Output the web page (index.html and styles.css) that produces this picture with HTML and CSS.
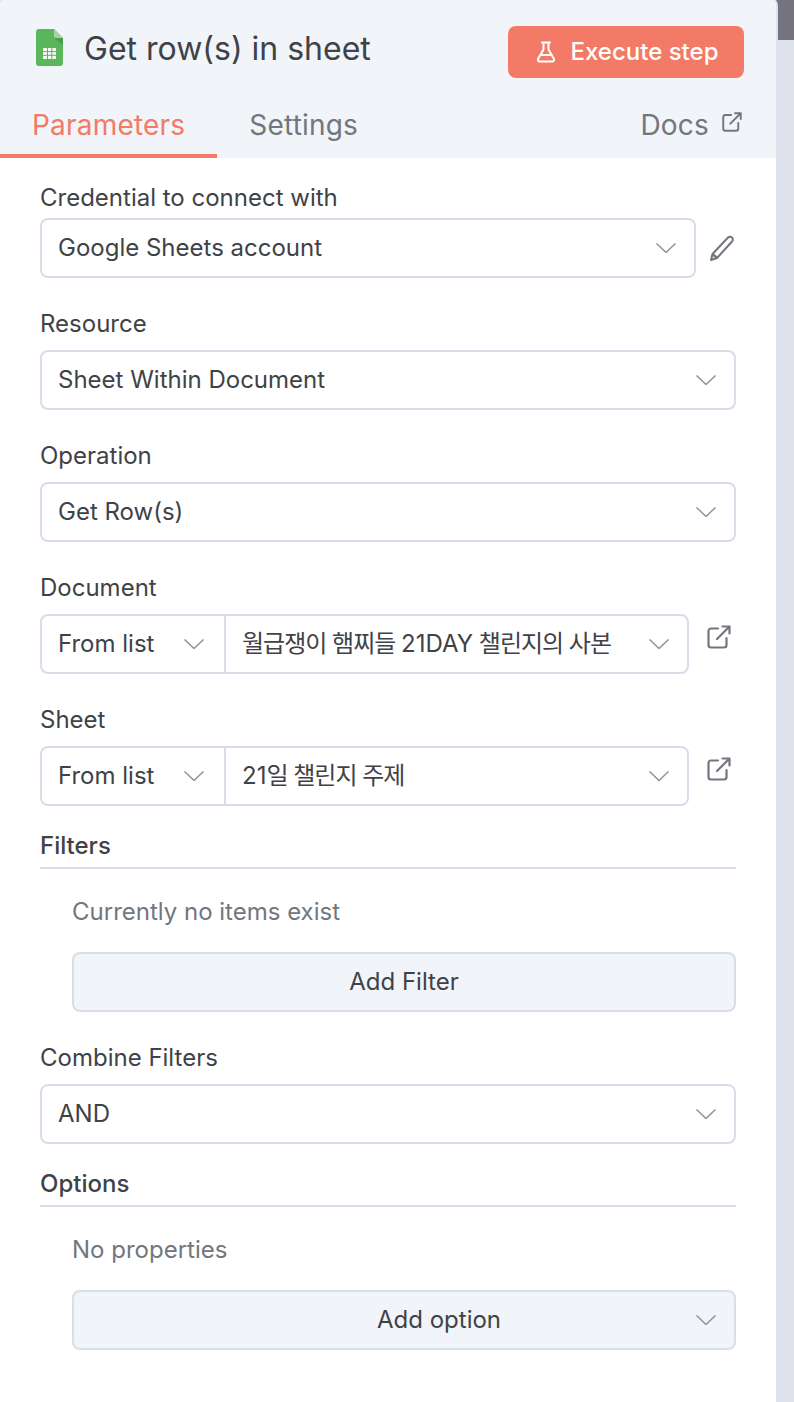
FILE: index.html
```html
<!DOCTYPE html>
<html>
<head>
    <meta charset="utf-8">
    <title>Get row(s) in sheet</title>
    <link rel="stylesheet" href="styles.css">
</head>
<body>
    <div class="page">
        <main class="panel">
            <header class="head">
                <div class="title-row">
                    <svg class="sheet-icon" width="28" height="37" viewBox="0 0 28 37">
                        <path d="M3 0H18L27 9V34a3 3 0 0 1-3 3H3a3 3 0 0 1-3-3V3a3 3 0 0 1 3-3z" fill="#5bb55b"/>
                        <path d="M18 9L27 16V9z" fill="#4a9f4c"/>
                        <path d="M18 0L27 9H20a2 2 0 0 1-2-2z" fill="#a3d6a0"/>
                        <path d="M7 19H20V30H7z" fill="#f3faf2"/>
                        <path d="M7 22.600H20M7 26.300H20M11.500 19V30M15.800 19V30" stroke="#5bb55b" stroke-width="1"/>
                    </svg>
                    <h1 class="title">Get row(s) in sheet</h1>
                    <button class="run-btn">
                        <svg width="20" height="22" viewBox="0 0 20 22" fill="none" stroke="#fff" stroke-width="2" stroke-linecap="round" stroke-linejoin="round">
                            <path d="M6 1.500H14M7.500 1.500V8.500L2 18a1.800 1.800 0 0 0 1.600 2.500H16.400A1.800 1.800 0 0 0 18 18L12.500 8.500V1.500M4.800 14H15.200"/>
                        </svg>
                        <span>Execute step</span>
                    </button>
                </div>
                <nav class="tabs">
                    <a class="tab active">Parameters</a>
                    <a class="tab">Settings</a>
                    <a class="tab docs">Docs
                        <svg width="20" height="20" viewBox="0 0 24 24" fill="none" stroke="#73767d" stroke-width="2.300" stroke-linecap="round" stroke-linejoin="round">
                            <path d="M11 3.500H4a2.500 2.500 0 0 0-2.500 2.500V20A2.500 2.500 0 0 0 4 22.500H17a2.500 2.500 0 0 0 2.500-2.500V13M10 14L22.500 1.500M15.500 1.500H22.500V8.500"/>
                        </svg>
                    </a>
                </nav>
            </header>

            <section class="body">
                <div class="field first">
                    <label>Credential to connect with</label>
                    <div class="row">
                        <div class="select grow"><span>Google Sheets account</span><svg class="chev" viewBox="0 0 20 10"><path d="M.5.500L10 9.500 19.500.500"/></svg></div>
                        <svg class="pencil" width="26" height="27" viewBox="0 0 26 27" fill="none" stroke="#73767d" stroke-width="2" stroke-linejoin="round">
                            <path d="M19 2.500a2.800 2.800 0 0 1 4 0 2.800 2.800 0 0 1 0 4L8 23l-6 2 1.500-6z"/>
                            <path d="M3.500 19l4.500 4" stroke-width="2.500"/>
                        </svg>
                    </div>
                </div>

                <div class="field">
                    <label>Resource</label>
                    <div class="select"><span>Sheet Within Document</span><svg class="chev" viewBox="0 0 20 10"><path d="M.5.500L10 9.500 19.500.500"/></svg></div>
                </div>

                <div class="field">
                    <label>Operation</label>
                    <div class="select"><span>Get Row(s)</span><svg class="chev" viewBox="0 0 20 10"><path d="M.5.500L10 9.500 19.500.500"/></svg></div>
                </div>

                <div class="field">
                    <label>Document</label>
                    <div class="row">
                        <div class="combo">
                            <div class="combo-mode"><span>From list</span><svg class="chev" viewBox="0 0 20 10"><path d="M.5.500L10 9.500 19.500.500"/></svg></div>
                            <div class="combo-value"><span><span class="ko">월급쟁이 햄찌들 </span>21DAY<span class="ko"> 챌린지의 사본</span></span><svg class="chev" viewBox="0 0 20 10"><path d="M.5.500L10 9.500 19.500.500"/></svg></div>
                        </div>
                        <svg class="open" width="24" height="24" viewBox="0 0 24 24" fill="none" stroke="#73767d" stroke-width="2.200" stroke-linecap="round" stroke-linejoin="round">
                            <path d="M11 3.500H4a2.500 2.500 0 0 0-2.500 2.500V20A2.500 2.500 0 0 0 4 22.500H17a2.500 2.500 0 0 0 2.500-2.500V13M10 14L22.500 1.500M15.500 1.500H22.500V8.500"/>
                        </svg>
                    </div>
                </div>

                <div class="field tight">
                    <label>Sheet</label>
                    <div class="row">
                        <div class="combo">
                            <div class="combo-mode"><span>From list</span><svg class="chev" viewBox="0 0 20 10"><path d="M.5.500L10 9.500 19.500.500"/></svg></div>
                            <div class="combo-value"><span>21<span class="ko">일 챌린지 주제</span></span><svg class="chev" viewBox="0 0 20 10"><path d="M.5.500L10 9.500 19.500.500"/></svg></div>
                        </div>
                        <svg class="open" width="24" height="24" viewBox="0 0 24 24" fill="none" stroke="#73767d" stroke-width="2.200" stroke-linecap="round" stroke-linejoin="round">
                            <path d="M11 3.500H4a2.500 2.500 0 0 0-2.500 2.500V20A2.500 2.500 0 0 0 4 22.500H17a2.500 2.500 0 0 0 2.500-2.500V13M10 14L22.500 1.500M15.500 1.500H22.500V8.500"/>
                        </svg>
                    </div>
                </div>

                <div class="group">
                    <div class="group-title">Filters</div>
                    <div class="group-inner">
                        <p class="empty">Currently no items exist</p>
                        <div class="add-btn"><span>Add Filter</span></div>
                    </div>
                </div>

                <div class="field tight">
                    <label>Combine Filters</label>
                    <div class="select"><span>AND</span><svg class="chev" viewBox="0 0 20 10"><path d="M.5.500L10 9.500 19.500.500"/></svg></div>
                </div>

                <div class="group">
                    <div class="group-title">Options</div>
                    <div class="group-inner">
                        <p class="empty">No properties</p>
                        <div class="add-btn add-option"><span>Add option</span><svg class="chev" viewBox="0 0 20 10"><path d="M.5.500L10 9.500 19.500.500"/></svg></div>
                    </div>
                </div>
            </section>
        </main>
        <aside class="side"><div class="side-top"></div></aside>
    </div>
</body>
</html>
```
FILE: styles.css
```css
* {
    box-sizing: border-box;
    font-family: Inter, "Noto Sans CJK KR", sans-serif;
}
body {
    margin: 0;
    background-color: #dfe2ec;
    color: #3f4247;
}
.page {
    display: flex;
    height: 1402px;
    overflow: hidden;
}
.panel {
    position: relative;
    z-index: 1;
    width: 776px;
    height: 1404px;
    margin-top: -2px;
    background: #fff;
    border-radius: 8px 8px 0 0;
    box-shadow: 0 0 0 2px #dfe2ec;
    overflow: hidden;
    flex-shrink: 0;
}
.side {
    flex: 1;
    background: #dfe2ec;
}
.side-top {
    height: 40px;
    margin-left: -6px;
    background: #75737f;
}

/* header */
.head {
    background: #f1f4f9;
    height: 160px;
}
.title-row {
    display: flex;
    align-items: flex-start;
    height: 92px;
    padding: 28px 32px 0 36px;
}
.sheet-icon {
    margin: 3px 21px 0 0;
}
.title {
    margin: 0;
    font-size: 32px;
    line-height: 46px;
    font-weight: 400;
    flex: 1;
    margin-left: -1px;
}
.run-btn {
    display: flex;
    align-items: center;
    justify-content: center;
    gap: 15px;
    width: 236px;
    height: 52px;
    padding: 0 0 0 2px;
    border: none;
    border-radius: 8px;
    background: #f27a66;
    color: #fff;
    font-size: 24px;
    font-weight: 500;
}
.run-btn span {
    margin-bottom: 2px;
}
.tabs {
    display: flex;
    height: 68px;
    padding-right: 34px;
}
.tab {
    font-size: 28px;
    letter-spacing: 0.2px;
    line-height: 70px;
    height: 68px;
    color: #73767d;
    padding: 0 32px;
}
.tab.active {
    color: #f27a66;
    border-bottom: 4px solid #f27a66;
}
.docs {
    margin-left: auto;
    padding: 2px 0 0;
    display: flex;
    align-items: center;
    gap: 13px;
}
.docs svg {
    margin-bottom: 6px;
}

/* form */
.body {
    padding: 26px 40px 0;
}
label, .group-title {
    display: block;
    font-size: 24px;
    line-height: 28px;
}
.field {
    margin-bottom: 32px;
}
.field.tight {
    margin-bottom: 26px;
}
.field label {
    margin-bottom: 12px;
}
.field.first label {
    margin-bottom: 6px;
}
.row {
    display: flex;
    align-items: flex-start;
}
.select, .combo {
    display: flex;
    align-items: center;
    height: 60px;
    border: 2px solid #d9dde9;
    border-radius: 8px;
    background: #fff;
    font-size: 24px;
    line-height: 28px;
}
.add-btn > span {
    margin-bottom: 2px;
}
.select {
    justify-content: space-between;
    padding: 0 18px 0 16px;
}
.grow {
    width: 656px;
}
.pencil {
    margin: 17px 0 0 13px;
}
.chev {
    width: 20px;
    height: 10px;
    flex-shrink: 0;
    fill: none;
    stroke: #909399;
    stroke-width: 1.500;
}
.combo {
    width: 649px;
}
.combo-mode {
    width: 184px;
    height: 100%;
    display: flex;
    align-items: center;
    justify-content: space-between;
    padding: 0 20px 0 16px;
    border-right: 2px solid #d9dde9;
}
.combo-value {
    flex: 1;
    display: flex;
    align-items: center;
    justify-content: space-between;
    padding: 0 18px 0 16px;
}
.ko {
    letter-spacing: -1px;
}
.open {
    margin: 11px 0 0 18px;
}
.group {
    margin-bottom: 32px;
}
.group-title {
    font-weight: 500;
    padding-bottom: 7px;
    border-bottom: 2px solid #d9dde9;
}
.group-inner {
    padding-left: 32px;
}
.empty {
    margin: 29px 0 26px;
    font-size: 24px;
    line-height: 28px;
    color: #73767d;
}
.add-btn {
    display: flex;
    align-items: center;
    justify-content: center;
    height: 60px;
    border: 2px solid #d9dde9;
    border-radius: 8px;
    background: #f1f4f9;
    font-size: 24px;
}
.add-option {
    justify-content: space-between;
    padding: 0 18px 0 303px;
}
```
